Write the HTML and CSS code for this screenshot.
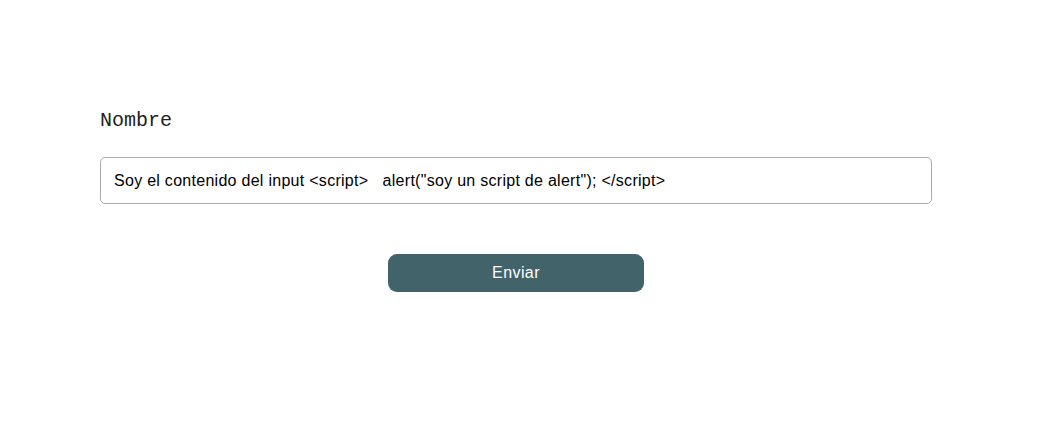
FILE: index.html
```html
<!DOCTYPE html>
<html lang="es">
<head>
<meta charset="utf-8">
<title>Formulario</title>
<link rel="stylesheet" href="styles.css">
</head>
<body>
<form class="form">
  <label class="label" for="nombre">Nombre</label>
  <input class="input" id="nombre" type="text" value="Soy el contenido del input &lt;script&gt;   alert(&quot;soy un script de alert&quot;); &lt;/script&gt;">
  <div class="actions">
    <button class="button" type="button">Enviar</button>
  </div>
</form>
</body>
</html>
```
FILE: styles.css
```css
html, body {
  margin: 0;
  padding: 0;
  background: #fff;
}
.form {
  width: 832px;
  margin-left: 100px;
  padding-top: 109px;
  display: flex;
  flex-direction: column;
}
.label {
  font-family: "Liberation Mono", "Courier New", monospace;
  font-size: 20px;
  line-height: 23px;
  color: #222;
  margin-bottom: 25px;
}
.input {
  box-sizing: border-box;
  width: 832px;
  height: 47px;
  border: 1px solid #ababab;
  border-radius: 5px;
  padding: 0 13px;
  font-family: "Liberation Sans", Arial, sans-serif;
  font-size: 16px;
  letter-spacing: 0.28px;
  color: #000;
  background: #fff;
  outline: none;
}
.actions {
  display: flex;
  justify-content: center;
  margin-top: 50px;
}
.button {
  width: 256px;
  height: 38px;
  border: none;
  border-radius: 9px;
  background: #42636a;
  color: #fff;
  font-family: "Liberation Sans", Arial, sans-serif;
  font-size: 16px;
  letter-spacing: 0.4px;
  cursor: pointer;
}
```
